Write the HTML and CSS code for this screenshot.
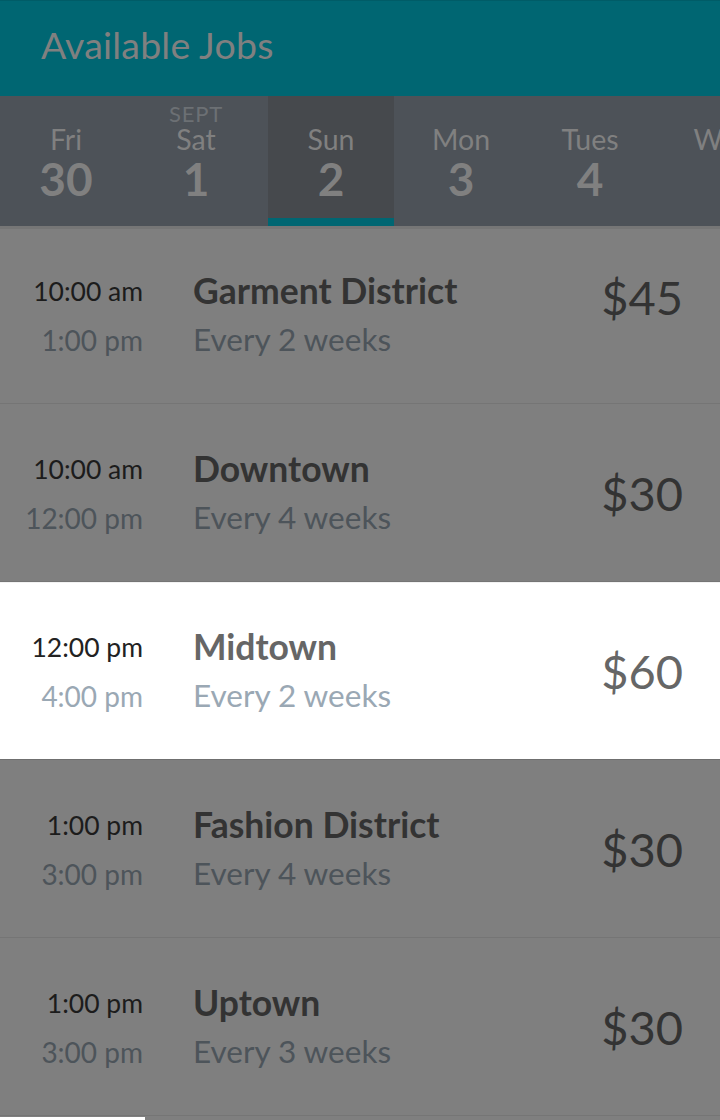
FILE: index.html
```html
<!DOCTYPE html>
<html lang="en">
<head>
<meta charset="utf-8">
<title>Available Jobs</title>
<link rel="stylesheet" href="styles.css">
</head>
<body>
<header class="appbar">
  <h1 class="appbar-title">Available Jobs</h1>
</header>
<nav class="days">
  <div class="day day-w132"><span class="day-month"></span><span class="day-name">Fri</span><span class="day-num">30</span></div>
  <div class="day day-w136 day-shift"><span class="day-month">SEPT</span><span class="day-name">Sat</span><span class="day-num">1</span></div>
  <div class="day day-w126 is-selected"><span class="day-month"></span><span class="day-name">Sun</span><span class="day-num">2</span></div>
  <div class="day day-w134"><span class="day-month"></span><span class="day-name">Mon</span><span class="day-num">3</span></div>
  <div class="day day-w124"><span class="day-month"></span><span class="day-name">Tues</span><span class="day-num">4</span></div>
  <div class="day day-w142"><span class="day-month"></span><span class="day-name">Wed</span></div>
</nav>
<ul class="jobs">
  <li class="job is-dim">
    <div class="job-times"><span class="job-start">10:00 am</span><span class="job-end">1:00 pm</span></div>
    <div class="job-info"><span class="job-place">Garment District</span><span class="job-freq">Every 2 weeks</span></div>
    <div class="job-price job-price-top">$45</div>
  </li>
  <li class="job is-dim">
    <div class="job-times"><span class="job-start">10:00 am</span><span class="job-end">12:00 pm</span></div>
    <div class="job-info"><span class="job-place">Downtown</span><span class="job-freq">Every 4 weeks</span></div>
    <div class="job-price">$30</div>
  </li>
  <li class="job is-active">
    <div class="job-times"><span class="job-start">12:00 pm</span><span class="job-end">4:00 pm</span></div>
    <div class="job-info"><span class="job-place">Midtown</span><span class="job-freq">Every 2 weeks</span></div>
    <div class="job-price">$60</div>
  </li>
  <li class="job is-dim">
    <div class="job-times"><span class="job-start">1:00 pm</span><span class="job-end">3:00 pm</span></div>
    <div class="job-info"><span class="job-place">Fashion District</span><span class="job-freq">Every 4 weeks</span></div>
    <div class="job-price">$30</div>
  </li>
  <li class="job is-dim">
    <div class="job-times"><span class="job-start">1:00 pm</span><span class="job-end">3:00 pm</span></div>
    <div class="job-info"><span class="job-place">Uptown</span><span class="job-freq">Every 3 weeks</span></div>
    <div class="job-price">$30</div>
  </li>
</ul>
<div class="tail"></div>
</body>
</html>
```

FILE: styles.css
```css
* { box-sizing: border-box; }
html, body {
  margin: 0;
  padding: 0;
}
body {
  width: 720px;
  height: 1120px;
  overflow: hidden;
  background: #7f7f7f;
  font-family: "Lato", "Open Sans", sans-serif;
}
.appbar {
  height: 96px;
  background: #006672;
  border-top: 1px solid #005c67;
  display: flex;
  align-items: center;
  padding-left: 41px;
}
.appbar-title {
  margin: 0;
  font-size: 37.5px;
  font-weight: 400;
  line-height: 45px;
  color: #808080;
  letter-spacing: 0.2px;
  padding-bottom: 9px;
}
.days {
  height: 130px;
  background: #4d5258;
  display: flex;
  overflow: hidden;
  box-shadow: 0 3px 0 #767676;
  position: relative;
  z-index: 1;
}
.day {
  flex: none;
  display: flex;
  flex-direction: column;
  align-items: center;
  padding-top: 7px;
  color: #808080;
  border-bottom: 8px solid transparent;
}
.day-w132 { width: 132px; }
.day-w136 { width: 136px; }
.day-w126 { width: 126px; }
.day-w134 { width: 134px; }
.day-w124 { width: 124px; }
.day-w142 { width: 142px; }
.day-shift { padding-right: 8px; }
.day.is-selected {
  background: #46494d;
  border-bottom-color: #006672;
}
.day-month {
  height: 21px;
  font-size: 22px;
  line-height: 21px;
  color: #6c7074;
  letter-spacing: 0.8px;
}
.day-name {
  font-size: 28.5px;
  line-height: 30px;
}
.day-num {
  font-size: 46px;
  font-weight: 700;
  line-height: 44px;
  margin-top: 3px;
}
.jobs {
  list-style: none;
  margin: 0;
  padding: 0;
}
.job {
  height: 178px;
  display: flex;
  align-items: center;
  border-bottom: 1px solid #757575;
  padding-right: 37px;
}
.job-times {
  width: 143px;
  flex: none;
  display: flex;
  flex-direction: column;
  align-items: flex-end;
  padding-top: 3px;
}
.job-start {
  font-size: 26.5px;
  line-height: 30px;
}
.job-end {
  font-size: 28px;
  line-height: 34px;
  margin-top: 17px;
}
.job-info {
  flex: 1;
  display: flex;
  flex-direction: column;
  padding-left: 50px;
}
.job-place {
  font-size: 35.5px;
  font-weight: 700;
  line-height: 40px;
}
.job-freq {
  font-size: 31.5px;
  line-height: 40px;
  margin-top: 8px;
}
.job-price {
  font-size: 47px;
  line-height: 50px;
}
.job-price-top {
  align-self: flex-start;
  margin-top: 46px;
}
.job.is-dim { background: #7f7f7f; }
.job.is-dim .job-start { color: #1c1c1c; }
.job.is-dim .job-end,
.job.is-dim .job-freq { color: #4d545a; }
.job.is-dim .job-place,
.job.is-dim .job-price { color: #333333; }
.job.is-active {
  background: #ffffff;
  border-top: 1px solid #f2f2f2;
  border-bottom-color: #6f6f6f;
}
.job.is-active .job-start { color: #222222; }
.job.is-active .job-end,
.job.is-active .job-freq { color: #9aa8b4; }
.job.is-active .job-place,
.job.is-active .job-price { color: #666666; }
.tail {
  width: 145px;
  height: 4px;
  margin-top: 1px;
  background: #ffffff;
}
```
